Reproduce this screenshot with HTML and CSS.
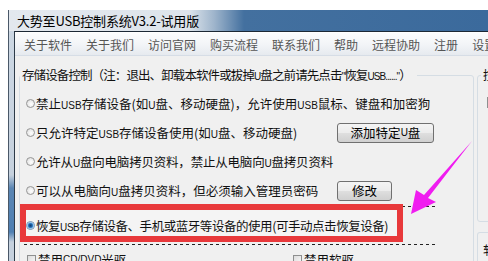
FILE: index.html
```html
<!DOCTYPE html>
<html lang="zh-CN">
<head>
<meta charset="utf-8">
<title>大势至USB控制系统</title>
<link rel="stylesheet" href="styles.css">
</head>
<body>
<div class="window">
  <div class="titlebar"><span class="title">大势至USB控制系统V3.2-试用版</span></div>
  <div class="client">
    <div class="menubar">
      <span>关于软件</span><span>关于我们</span><span>访问官网</span><span>购买流程</span><span>联系我们</span><span>帮助</span><span>远程协助</span><span>注册</span><span>设置</span>
    </div>
    <div class="panel">
      <fieldset class="group main">
        <legend>存储设备控制（注：退出、卸载本软件或拔掉<span class="lat">U</span>盘之前请先点击<span class="lat">"</span>恢复<span class="lat">USB......"</span>）</legend>
        <div class="row"><i class="radio"></i><span class="txt">禁止<span class="lat">USB</span>存储设备(如<span class="lat">U</span>盘、移动硬盘)，允许使用<span class="lat">USB</span>鼠标、键盘和加密狗</span></div>
        <div class="row"><i class="radio"></i><span class="txt fixed">只允许特定<span class="lat">USB</span>存储设备使用(如<span class="lat">U</span>盘、移动硬盘)</span><span class="btn wide">添加特定<span class="lat">U</span>盘</span></div>
        <div class="row"><i class="radio"></i><span class="txt tight">允许从<span class="lat">U</span>盘向电脑拷贝资料，禁止从电脑向<span class="lat">U</span>盘拷贝资料</span></div>
        <div class="row"><i class="radio"></i><span class="txt fixed">可以从电脑向<span class="lat">U</span>盘拷贝资料，但必须输入管理员密码</span><span class="btn narrow">修改</span></div>
        <div class="row sel"><i class="radio on"></i><span class="txt">恢复<span class="lat">USB</span>存储设备、手机或蓝牙等设备的使用(可手动点击恢复设备)</span><div class="redbox"></div></div>
        <div class="row checks"><span class="chk first"><i class="box"></i>禁用<span class="lat">CD/DVD</span>光驱</span><span class="chk"><i class="box"></i>禁用软驱</span></div>
      </fieldset>
      <div class="side">
        <fieldset class="group g1"><legend>控制</legend><i class="mini"></i></fieldset>
        <div class="group g2"><span class="g2label">软件</span></div>
      </div>
    </div>
  </div>
</div>
<svg class="arrow" viewBox="0 0 488 261" width="488" height="261">
  <polygon points="411,214 416,190 424,195 472,141 428,198 436,202" fill="#f01cf0"/>
</svg>
</body>
</html>
```

FILE: styles.css
```css
html, body {
  margin: 0;
  padding: 0;
}
body {
  width: 488px;
  height: 261px;
  overflow: hidden;
  background: #ffffff;
  position: relative;
  font-family: "Noto Sans CJK SC", "Noto Sans", sans-serif;
  color: #111;
}
.window {
  margin: 10px 0 0 8px;
  height: 251px;
  border-left: 1px solid #4a5868;
  background: linear-gradient(180deg, #cdd8e4 0, #c5d1de 165px, #5a86b4 178px, #4f7fb2 222px, #c5d1de 232px);
}
.titlebar {
  height: 21px;
  padding-left: 8px;
  display: flex;
  align-items: center;
  background: linear-gradient(90deg, #e3e8ee 0, #dde4eb 180px, #9fb5cc 205px, #43709f 235px, #3b6a9c 100%);
}
.title {
  font-size: 13px;
  color: #000;
  letter-spacing: -0.2px;
}
.client {
  margin-left: 5px;
  height: 230px;
  border-left: 1px solid #2c3a48;
  border-top: 1px solid #1c2835;
  background: #f0f0f0;
}
.menubar {
  height: 22px;
  border-top: 1px solid #ffffff;
  border-bottom: 1px solid #d6dde6;
  padding-left: 9px;
  display: flex;
  align-items: center;
  gap: 14px;
  font-size: 12px;
  color: #555;
  background: linear-gradient(180deg, #fbfcfd 0, #f3f5f8 50%, #e6eaef 100%);
  white-space: nowrap;
}
.panel {
  display: flex;
  padding: 10px 0 0 4px;
  font-size: 12.5px;
}
.lat {
  font-family: "Liberation Sans", sans-serif;
  font-size: 10px;
}
.group {
  margin: 0;
  padding: 0;
  border: 1px solid #d5dde4;
  border-radius: 3px;
  box-sizing: border-box;
}
.group legend {
  padding: 0 6px 0 2px;
  line-height: 18px;
  height: 18px;
  white-space: nowrap;
}
.main legend {
  letter-spacing: -0.9px;
}
.main {
  width: 455px;
  flex: none;
  height: 230px;
  padding-top: 5px;
  min-width: 0;
}
.row {
  height: 29px;
  display: flex;
  align-items: center;
  padding-left: 6px;
  white-space: nowrap;
}
.radio {
  width: 9px;
  height: 9px;
  flex: none;
  box-sizing: border-box;
  border-radius: 50%;
  border: 1px solid #969696;
  background: radial-gradient(circle at 60% 60%, #ffffff 0, #e9e9e9 60%, #d0d0d0 100%);
  margin-right: 1px;
}
.radio.on {
  border-color: #6f8fb0;
  background: radial-gradient(circle, #123f73 0, #1f5d9e 1.5px, #4a9be0 2.6px, #b9d9f5 3.2px, #ffffff 3.6px);
}
.txt.tight {
  letter-spacing: -0.2px;
}
.txt.fixed {
  width: 301px;
  flex: none;
}
.btn {
  height: 20px;
  box-sizing: border-box;
  border: 1px solid #707070;
  border-radius: 3px;
  background: linear-gradient(180deg, #f4f4f4 0, #ececec 48%, #dedede 52%, #d0d0d0 100%);
  display: flex;
  align-items: center;
  justify-content: center;
  flex: none;
  color: #000;
}
.btn.wide { width: 97px; }
.btn.narrow { width: 55px; }
.row.sel {
  position: relative;
  height: 39px;
  margin: 1px 0 0 4px;
  padding-left: 2px;
  width: 413px;
  box-sizing: border-box;
  background:
    repeating-linear-gradient(90deg, #222 0 3px, transparent 3px 6px) top left / 100% 1px no-repeat,
    repeating-linear-gradient(90deg, #222 0 3px, transparent 3px 6px) bottom left / 100% 1px no-repeat;
}
.row.sel .txt {
  letter-spacing: -0.45px;
}
.redbox {
  position: absolute;
  left: -4px;
  top: -2px;
  width: 383px;
  height: 38px;
  box-sizing: border-box;
  border: 6px solid #e8393b;
  background: rgba(255, 255, 255, 0.25);
}
.row.sel .radio, .row.sel .txt {
  position: relative;
  z-index: 1;
}
.row.checks {
  padding-left: 7px;
}
.chk {
  display: flex;
  align-items: center;
}
.chk.first {
  width: 266px;
  flex: none;
}
.box {
  width: 9px;
  height: 9px;
  box-sizing: border-box;
  border: 1px solid #8e8f8f;
  background: linear-gradient(135deg, #dcdcdc, #f8f8f8);
  margin-right: 2px;
}
.side {
  margin-left: 3px;
  width: 60px;
  flex: none;
  display: flex;
  flex-direction: column;
}
.g1 {
  height: 156px;
  position: relative;
}
.g1 legend {
  margin-left: 3px;
  padding: 0 2px;
}
.mini {
  display: block;
  width: 9px;
  height: 11px;
  box-sizing: border-box;
  border: 1px solid #8e8f8f;
  background: #fbfbfb;
  margin: 13px 0 0 9px;
}
.g2 {
  margin-top: 10px;
  height: 60px;
  padding: 9px 0 0 5px;
  border-bottom: none;
}
.g2label {
  display: block;
  line-height: 16px;
}
.arrow {
  position: absolute;
  left: 0;
  top: 0;
  pointer-events: none;
}
```
